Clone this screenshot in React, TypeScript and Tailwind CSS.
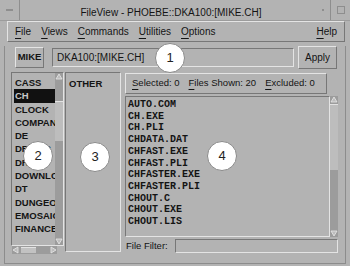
import React from "react"

const files = [
  "AUTO.COM",
  "CH.EXE",
  "CH.PLI",
  "CHDATA.DAT",
  "CHFAST.EXE",
  "CHFAST.PLI",
  "CHFASTER.EXE",
  "CHFASTER.PLI",
  "CHOUT.C",
  "CHOUT.EXE",
  "CHOUT.LIS",
]

const dirs = ["CASS", "CH", "CLOCK", "COMPAN", "DE", "DRIVER", "DRAW", "DOWNLC", "DT", "DUNGEO", "EMOSAIC", "FINANCE"]

const raised = "border border-t-[#e4e4e4] border-l-[#e4e4e4] border-b-[#777] border-r-[#777]"
const sunken = "border border-t-[#777] border-l-[#777] border-b-[#e4e4e4] border-r-[#e4e4e4]"

function Mn({ c, rest }: { c: string; rest: string }) {
  return (
    <span>
      <span className="underline underline-offset-[3px] decoration-[1px]">{c}</span>
      {rest}
    </span>
  )
}

function Callout({ n, className }: { n: string; className: string }) {
  return (
    <div
      className={
        "absolute w-[30px] h-[30px] rounded-full bg-white border border-[#8a8a8a] flex items-center justify-center text-[13px] text-[#222] font-['Liberation_Sans',Arial,sans-serif] " +
        className
      }
    >
      {n}
    </div>
  )
}

function Arrow({ dir }: { dir: "up" | "down" | "left" | "right" }) {
  const pts = {
    up: "1,6 4,1 7,6",
    down: "1,2 4,7 7,2",
    left: "6,1 1,4 6,7",
    right: "2,1 7,4 2,7",
  }[dir]
  return (
    <svg width="8" height="8" viewBox="0 0 8 8" className="block">
      <polygon points={pts} fill="#bdbdbd" stroke="#e8e8e8" strokeWidth="0.8" />
    </svg>
  )
}

export default function App() {
  return (
    <div className="relative w-[350px] h-[266px] bg-[#b3b3b3] overflow-hidden text-[#141414] font-['Liberation_Sans',Arial,sans-serif]">
      {/* title bar */}
      <div className="flex h-[21px] border-b border-[#9c9c9c]">
        <div className="w-[20px] border-r border-[#8e8e8e] flex items-center justify-center">
          <div className="w-[7px] h-[2px] bg-[#8e8e8e]" />
        </div>
        <div className="flex-1 text-center text-[10px] leading-[21px] pt-[2px]">FileView - PHOEBE::DKA100:[MIKE.CH]</div>
        <div className="w-[8px] flex items-center">
          <div className="w-[2px] h-[2px] bg-[#8e8e8e]" />
        </div>
        <div className="w-[20px] border-l border-[#8e8e8e] flex items-center justify-center">
          <div className="w-[8px] h-[8px] border border-[#8e8e8e]" />
        </div>
      </div>

      {/* menu bar */}
      <div className={"ml-[7px] mr-[5px] h-[21px] flex items-center pl-[7px] pr-[7px] gap-[10px] text-[10px] font-medium " + raised}>
        <Mn c="F" rest="ile" />
        <Mn c="V" rest="iews" />
        <Mn c="C" rest="ommands" />
        <Mn c="U" rest="tilities" />
        <Mn c="O" rest="ptions" />
        <span className="ml-auto">
          <Mn c="H" rest="elp" />
        </span>
      </div>

      {/* body */}
      <div className="mx-[4px] h-[218px] border-x border-b border-[#8c8c8c]">
        <div className="flex items-center h-[23px] mt-[4px]">
          <div className={"ml-[10px] w-[29px] h-[21px] flex items-center justify-center text-[9.5px] font-bold " + raised}>MIKE</div>
          <div className={"ml-[8px] w-[242px] h-[19px] flex items-center pl-[4px] text-[10px] font-medium " + sunken}>DKA100:[MIKE.CH]</div>
          <div className={"ml-[4px] w-[39px] h-[23px] flex items-center justify-center text-[10px] font-medium " + raised}>Apply</div>
        </div>

        <div className="flex items-start mt-[3px]">
          {/* directories */}
          <div className="ml-[6px] w-[53px]">
            <div className={"flex h-[174px] " + sunken}>
              <div className="flex-1 pt-[3px] pl-[2px] text-[9.5px] font-bold leading-[13.3px] overflow-hidden">
                {dirs.map((d) => (
                  <div
                    key={d}
                    className={d === "CH" ? "bg-[#111] text-[#c8c8c8] pl-[1px] whitespace-nowrap" : "pl-[1px] whitespace-nowrap"}
                  >
                    {d}
                  </div>
                ))}
              </div>
              <div className="w-[8px] bg-[#9c9c9c] flex flex-col">
                <Arrow dir="up" />
                <div className="mt-[20px] h-[40px] bg-[#bdbdbd] border-t border-[#e2e2e2]" />
                <div className="flex-1" />
                <Arrow dir="down" />
              </div>
            </div>
            <div className="ml-[1px] w-[45px] h-[8px] bg-[#9c9c9c] flex items-center">
              <Arrow dir="left" />
              <div className="ml-[1px] w-[15px] h-[6px] bg-[#c2c2c2] border-t border-[#e2e2e2]" />
              <div className="flex-1" />
              <Arrow dir="right" />
            </div>
          </div>

          {/* groups */}
          <div className={"ml-[1px] w-[56px] h-[180px] pl-[3px] pt-[4px] text-[9.5px] font-bold " + sunken}>OTHER</div>

          {/* files */}
          <div className="ml-[4px] w-[213px]">
            <div className={"mt-[1px] w-[202px] h-[21px] flex items-center pl-[6px] gap-[9px] text-[9.5px] font-medium " + raised}>
              <span>
                <Mn c="S" rest="elected: 0" />
              </span>
              <span>
                <Mn c="F" rest="iles Shown: 20" />
              </span>
              <span>
                <Mn c="E" rest="xcluded: 0" />
              </span>
            </div>
            <div className="mt-[2px] h-[141px] flex">
              <div className={"flex-1 pl-[2px] pt-[2px] font-['Liberation_Mono',monospace] font-bold text-[10px] leading-[11.7px] " + sunken}>
                {files.map((f) => (
                  <div key={f}>{f}</div>
                ))}
              </div>
              <div className="w-[8px] bg-[#9c9c9c] flex flex-col">
                <Arrow dir="up" />
                <div className="h-[66px] bg-[#bdbdbd] border-t border-[#e2e2e2]" />
                <div className="flex-1" />
                <Arrow dir="down" />
              </div>
            </div>
            <div className="mt-[2px] h-[14px] flex items-center">
              <span className="ml-[1px] text-[9.5px] font-medium">File Filter:</span>
              <div className={"ml-auto w-[163px] h-[14px] " + sunken} />
            </div>
          </div>
        </div>
      </div>

      <Callout n="1" className="left-[155px] top-[43px]" />
      <Callout n="2" className="left-[23px] top-[141px]" />
      <Callout n="3" className="left-[80px] top-[142px]" />
      <Callout n="4" className="left-[207px] top-[141px]" />
    </div>
  )
}
